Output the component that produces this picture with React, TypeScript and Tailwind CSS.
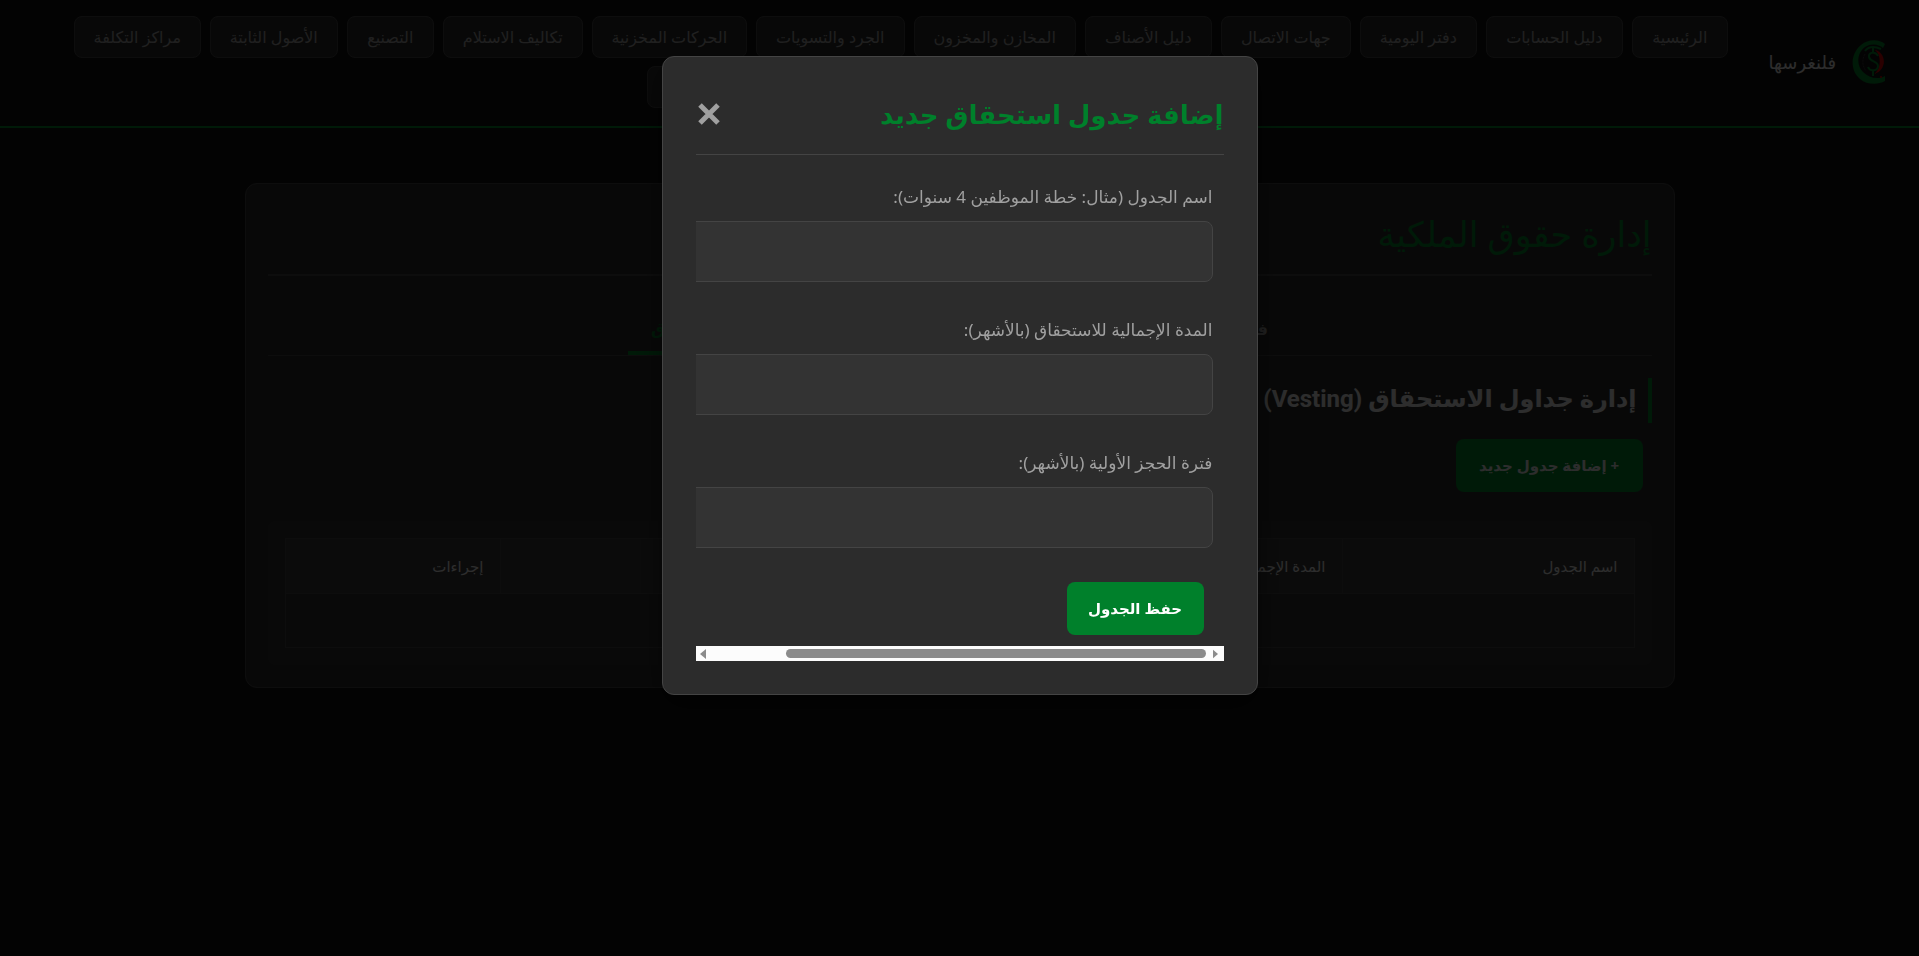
import { useState } from "react";

const navLinks = [
  { label: "الرئيسية", width: "w-24" },
  { label: "دليل الحسابات", width: "w-[137px]" },
  { label: "دفتر اليومية", width: "w-[117px]" },
  { label: "جهات الاتصال", width: "w-[130px]" },
  { label: "دليل الأصناف", width: "w-[127px]" },
  { label: "المخازن والمخزون", width: "w-[162px]" },
  { label: "الجرد والتسويات", width: "w-[149px]" },
  { label: "الحركات المخزنية", width: "w-[155px]" },
  { label: "تكاليف الاستلام", width: "w-[140px]" },
  { label: "التصنيع", width: "w-[87px]" },
  { label: "الأصول الثابتة", width: "w-[128px]" },
  { label: "مراكز التكلفة", width: "w-[127px]" },
  { label: "حقوق الملكية", width: "w-[120px]" },
  { label: "التقارير", width: "w-[120px]" },
  { label: "المستخدمون", width: "w-[120px]" },
  { label: "الإعدادات", width: "w-[120px]" },
];

const tabs = [
  { label: "فئات الأسهم", align: "text-start" },
  { label: "المساهمون", align: "text-center" },
  { label: "جداول الاستحقاق", align: "text-end" },
];

const columns = [
  { label: "اسم الجدول", width: "w-[292px]" },
  { label: "المدة الإجمالية (شهر)", width: "w-auto" },
  { label: "فترة الحجز (شهر)", width: "w-auto" },
  { label: "إجراءات", width: "w-[215px]" },
];

const fields = [
  { id: "name", type: "text", label: "اسم الجدول (مثال: خطة الموظفين 4 سنوات):" },
  { id: "duration", type: "number", label: "المدة الإجمالية للاستحقاق (بالأشهر):" },
  { id: "cliff", type: "number", label: "فترة الحجز الأولية (بالأشهر):" },
];

function Logo() {
  return (
    <svg viewBox="0 0 34 44" className="w-[34px] h-11" fill="none" aria-hidden="true">
      <path
        d="M33 4C27-1 16-1 9 5C-2 14-2 31 8 39C15 45 26 45 33 41L33 36C26 40 17 38 11 32C4 25 5 13 13 7C19 3 27 4 31 8Z"
        fill="#00802b"
      />
      <path d="M13 11C16 7 22 6 29 9" stroke="#00802b" strokeWidth="2" />
      <path d="M13 14C10 19 10 26 14 31" stroke="#333333" strokeDasharray="2 1" />
      <path d="M23 10C34 12 36 30 22 34C29 29 30 16 23 10Z" fill="#d00000" />
      <circle cx="29" cy="37" r="1" fill="#d00000" />
      <path
        d="M26 16C24 11 16 12 17 17C18 22 26 21 26 26C26 31 18 32 16 27M21 8V12M21 31V36"
        stroke="#00802b"
        strokeWidth="2"
      />
    </svg>
  );
}

function Header() {
  return (
    <header className="flex items-start px-[33px] pt-4 pb-[18px] border-b-2 border-[#00802b]">
      <div className="flex items-center gap-4 h-[92px]">
        <Logo />
        <span className="text-lg leading-6 text-[#e0e0e0]">فلنغرسها</span>
      </div>
      <nav className="flex-1 flex flex-wrap justify-center gap-x-[9px] gap-y-2">
        {navLinks.map((link) => (
          <a
            key={link.label}
            href="#"
            className={`${link.width} h-[42px] flex items-center justify-center whitespace-nowrap rounded-lg border border-[#444444] bg-[#2c2c2c] text-base text-[#a0a0a0]`}
          >
            {link.label}
          </a>
        ))}
      </nav>
    </header>
  );
}

function ScheduleTable() {
  return (
    <div className="mt-[29px] rounded-lg bg-[#303030] p-[17px]">
      <table className="w-full table-fixed border-collapse text-[15px] text-[#e0e0e0]">
        <thead>
          <tr className="h-[55px] bg-[#383838]">
            {columns.map((column) => (
              <th
                key={column.label}
                className={`${column.width} px-4 text-start font-normal border border-[#444444]`}
              >
                {column.label}
              </th>
            ))}
          </tr>
        </thead>
        <tbody>
          <tr className="h-[54px]">
            <td colSpan={4} className="border border-[#444444]" />
          </tr>
        </tbody>
      </table>
    </div>
  );
}

function ScrollBar() {
  return (
    <div dir="ltr" className="flex items-center h-[15px] pl-1 pr-[6px] bg-[#fcfcfc]">
      <svg viewBox="0 0 6 10" className="w-[6px] h-[10px]" fill="#8b8b8b">
        <path d="M6 0V10L0 5Z" />
      </svg>
      <div className="flex-1" />
      <div className="w-[81%] h-[9px] mr-[7px] rounded-full bg-[#8b8b8b]" />
      <svg viewBox="0 0 6 10" className="w-[5px] h-[10px]" fill="#8b8b8b">
        <path d="M0 0V10L6 5Z" />
      </svg>
    </div>
  );
}

function AddScheduleModal({ onClose }: { onClose: () => void }) {
  return (
    <div className="fixed inset-0 flex items-start justify-center pt-14 bg-black/80">
      <div
        role="dialog"
        aria-labelledby="modal-title"
        className="w-[596px] p-[33px] rounded-xl border border-[#444444] bg-[#2c2c2c] shadow-[0_10px_30px_rgba(0,0,0,0.5)]"
      >
        <div className="flex items-center justify-between h-[65px] pb-[17px] border-b border-[#444444]">
          <h2 id="modal-title" className="text-[26px] leading-10 font-bold text-[#00802b]">
            إضافة جدول استحقاق جديد
          </h2>
          <button type="button" aria-label="إغلاق" onClick={onClose} className="px-[2px]">
            <svg viewBox="0 0 22 22" className="size-[22px]" stroke="#a0a0a0" strokeWidth="5">
              <path d="M2 2L20 20M20 2L2 20" />
            </svg>
          </button>
        </div>

        <div className="overflow-hidden">
          <form className="w-[120%] pt-[26px] pr-[11px] pb-[11px]">
            <div className="space-y-8">
              {fields.map((field) => (
                <div key={field.id}>
                  <label
                    htmlFor={field.id}
                    className="block mb-2 text-[17px] leading-8 text-[#a0a0a0]"
                  >
                    {field.label}
                  </label>
                  <input
                    id={field.id}
                    type={field.type}
                    className="block w-full h-[61px] px-4 rounded-lg border border-[#444444] bg-[#333333] text-[#e0e0e0]"
                  />
                </div>
              ))}
            </div>
            <button
              type="submit"
              className="block w-[137px] h-[53px] mt-[34px] mr-[9px] rounded-lg bg-[#00802b] text-[15px] font-bold text-white"
            >
              حفظ الجدول
            </button>
          </form>
        </div>
        <ScrollBar />
      </div>
    </div>
  );
}

export default function App() {
  const [open, setOpen] = useState(true);

  return (
    <div
      dir="rtl"
      lang="ar"
      className="min-h-screen bg-[#121212] font-['Noto_Sans','DejaVu_Sans',sans-serif]"
    >
      <Header />
      <main className="max-w-[1430px] mx-auto mt-[55px] px-[22px] pt-6 pb-[22px] rounded-xl border border-[#444444] bg-[#2c2c2c]">
        <h1 className="h-[68px] border-b-2 border-[#444444] text-[35px] leading-[52px] text-[#00802b]">
          إدارة حقوق الملكية
        </h1>

        <div className="flex justify-center h-[58px] mt-[22px] border-b border-[#444444]">
          {tabs.map((tab) => (
            <button
              key={tab.label}
              type="button"
              className={`w-[221px] px-[23px] pt-2 text-base font-bold border-b-4 ${tab.align} ${
                tab.label === "جداول الاستحقاق"
                  ? "text-[#00802b] border-[#00802b]"
                  : "text-[#a0a0a0] border-transparent"
              }`}
            >
              {tab.label}
            </button>
          ))}
        </div>

        <h2 className="h-[45px] mt-[22px] pr-[11px] border-r-4 border-[#00802b] font-[Roboto,'DejaVu_Sans',sans-serif] text-2xl leading-[42px] font-bold text-[#e0e0e0]">
          إدارة جداول الاستحقاق (Vesting)
        </h2>
        <button
          type="button"
          onClick={() => setOpen(true)}
          className="block w-[187px] h-[53px] mt-4 mr-[9px] rounded-lg bg-[#00802b] text-[15px] font-bold text-[#e0e0e0]"
        >
          + إضافة جدول جديد
        </button>

        <ScheduleTable />
      </main>

      {open && <AddScheduleModal onClose={() => setOpen(false)} />}
    </div>
  );
}
